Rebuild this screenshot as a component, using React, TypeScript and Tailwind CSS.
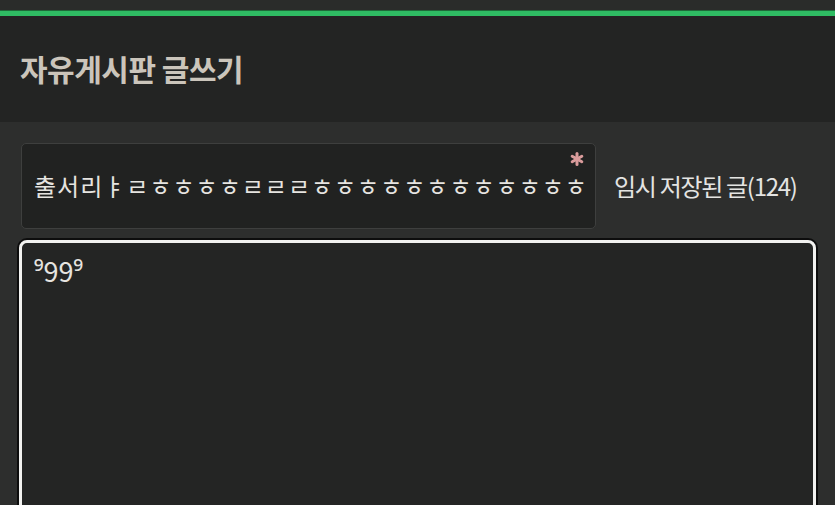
import React from "react";

export default function App() {
  const font = { fontFamily: '"Noto Sans CJK KR", "Noto Sans", sans-serif' };
  return (
    <div className="w-[835px] h-[505px] overflow-hidden bg-[#2d2e2d] flex flex-col" style={font}>
      <div className="h-[10px] bg-[#2a2c2a] shrink-0" />
      <div className="h-[6px] bg-[#2fbc63] border-t border-[#1f6a3a] shrink-0" />
      <div className="h-[106px] bg-[#232423] flex items-center pl-[20px] shrink-0">
        <h1 className="text-[30px] font-bold text-[#cbc5bb] leading-none tracking-[-0.5px] -mt-[2px]">
          자유게시판 글쓰기
        </h1>
      </div>
      <div className="flex flex-col pt-[21px] px-[20px]">
        <div className="flex items-center">
          <div className="relative ml-[1px] w-[575px] h-[86px] bg-[#212221] border border-[#3e3f3e] rounded-[5px] flex items-center pl-[12px] pr-[5px] overflow-hidden">
            <span className="text-[24px] text-[#e6e4e0] whitespace-nowrap overflow-hidden leading-none tracking-[1px]">
              출서리ㅑㄹㅎㅎㅎㅎㄹㄹㄹㅎㅎㅎㅎㅎㅎㅎㅎㅎㅎㅎㅎㅎㅎㅎㅎ
            </span>
            <svg className="absolute right-[11px] top-[8px]" width="14" height="14" viewBox="0 0 14 14">
              <g stroke="#d99b9b" strokeWidth="3" strokeLinecap="round">
                <line x1="7" y1="1.5" x2="7" y2="12.5" />
                <line x1="2.2" y1="4.2" x2="11.8" y2="9.8" />
                <line x1="2.2" y1="9.8" x2="11.8" y2="4.2" />
              </g>
            </svg>
          </div>
          <div className="ml-[18px] text-[24px] text-[#e4e4e2] tracking-[-1.3px] leading-none whitespace-nowrap">
            임시 저장된 글(124)
          </div>
        </div>
        <div className="mt-[11px] h-[300px] w-[797px] -ml-[1px] rounded-[8px] border-[3px] border-[#f2f2f0] bg-[#242524] shadow-[0_0_0_2px_#0d0d0d] pl-[12px] pt-[14px]">
          <span className="text-[27px] text-[#e6e4e0] leading-none">⁹99⁹</span>
        </div>
      </div>
    </div>
  );
}
